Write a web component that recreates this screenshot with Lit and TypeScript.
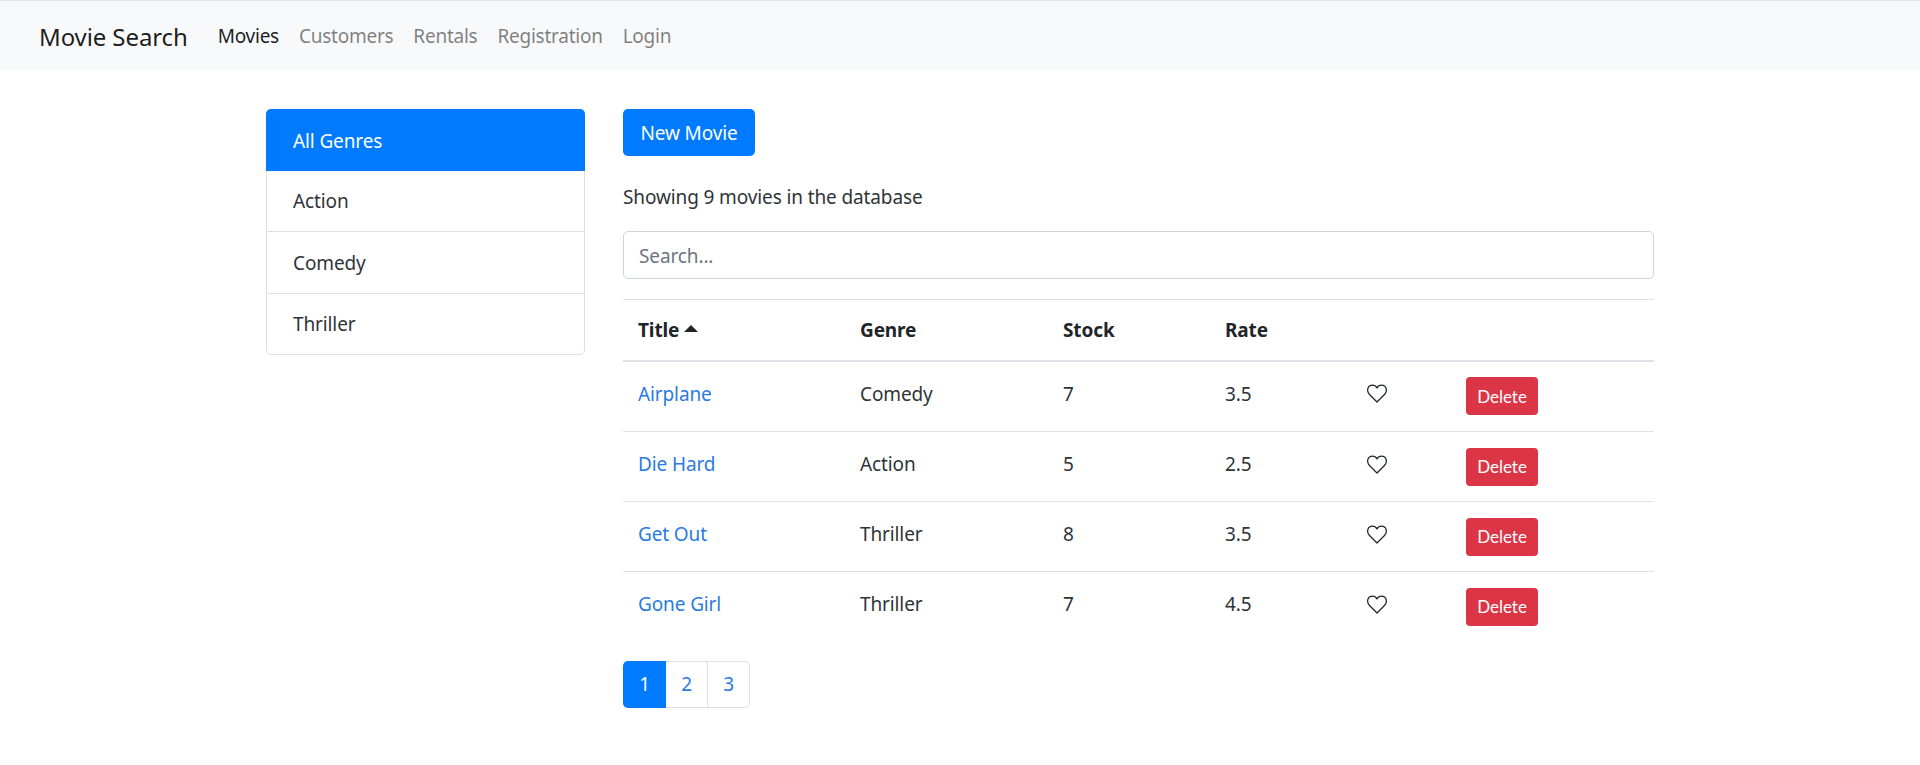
import { LitElement, html, css, svg } from "lit";
import { customElement } from "lit/decorators.js";

const rows = [
  ["Airplane", "Comedy", "7", "3.5"],
  ["Die Hard", "Action", "5", "2.5"],
  ["Get Out", "Thriller", "8", "3.5"],
  ["Gone Girl", "Thriller", "7", "4.5"],
];
const heart = svg`<path d="M8 15.2 1.7 8.8C-1.2 5.8.1 1 4.2 1 6 1 7.3 2 8 3.3 8.7 2 10 1 11.8 1c4.100 0 5.400 4.800 2.500 7.800z" fill="none" stroke="#212529" stroke-width="1.05" stroke-linejoin="round"/>`;

@customElement("app-root")
export class AppRoot extends LitElement {
  static styles = css`
    :host { display: block; height: 765px; background: #fff; color: #2f3438; font-family: "Noto Sans", "Open Sans", sans-serif; font-size: 19px; letter-spacing: -0.12px; overflow: hidden; }
    a { text-decoration: none; color: inherit; }
    .nav { height: 71px; box-sizing: border-box; border-top: 1px solid #dee2e6; background: #f8f9fa; display: flex; align-items: center; padding: 0 39px; }
    .brand { font-size: 24px; letter-spacing: -0.1px; color: rgba(0,0,0,.9); margin-right: 30px; }
    .links { display: flex; gap: 20px; color: rgba(0,0,0,.5); letter-spacing: -0.25px; }
    .links .on { color: rgba(0,0,0,.9); }
    .page { display: flex; gap: 38px; padding: 38px 0 0 266px; width: 1388px; }
    .side { width: 319px; height: 246px; box-sizing: border-box; flex: none; border: 1px solid #dfdfdf; border-radius: 5px; display: flex; flex-direction: column; }
    .side div { flex: none; box-sizing: border-box; height: 62px; display: flex; align-items: center; padding-left: 26px; border-top: 1px solid #dfdfdf; }
    .side div:first-child { border: 0; margin: -1px -1px 0; padding-left: 27px; padding-top: 1px; background: #007bff; color: #fff; border-radius: 5px 5px 0 0; }
    .side div:nth-child(2) { height: 60px; border-top: 0; }
    .side div:last-child { height: 61px; }
    .main { width: 1031px; }
    .new { width: 132px; height: 47px; background: #007bff; color: #fff; border-radius: 5px; display: flex; align-items: center; justify-content: center; }
    .count { margin: 24px 0 0; line-height: 34px; height: 51px; }
    .search { height: 48px; box-sizing: border-box; border: 1px solid #ced4da; border-radius: 5px; display: flex; align-items: center; padding: 1px 15px 0; color: #6c757d; }
    table { border-collapse: collapse; width: 1031px; table-layout: fixed; margin-top: 20px; }
    th { text-align: left; font-weight: 700; color: #212529; height: 61px; padding: 0 15px; border-top: 1px solid #dee2e6; border-bottom: 2px solid #dee2e6; box-sizing: border-box; }
    td { height: 70px; padding: 0 15px 5px; border-top: 1px solid #dee2e6; box-sizing: border-box; }
    td.act { padding-bottom: 0; }
    tr:first-child td { border-top: 0; height: 71px; }
    .caret { display: inline-block; width: 0; height: 0; border: 7px solid transparent; border-top: 0; border-bottom: 7px solid #212529; vertical-align: 5px; margin-left: 5px; }
    .link { color: #2a7ae2; }
    .heart { display: block; width: 20px; height: 19px; }
    .del { width: 72px; height: 38px; background: #dc3545; color: #fff; border-radius: 4px; display: flex; align-items: center; justify-content: center; font-family: Lato, sans-serif; font-size: 17px; letter-spacing: 0; }
    .pages { display: flex; margin-top: 19px; height: 47px; width: 127px; box-sizing: border-box; color: #2a7ae2; }
    .pages span { display: flex; align-items: center; justify-content: center; flex: 1; border: 1px solid #dee2e6; border-left: 0; }
    .pages span:first-child { flex: none; width: 43px; background: #007bff; color: #fff; border: 0; border-radius: 5px 0 0 5px; }
    .pages span:last-child { border-radius: 0 5px 5px 0; }
  `;
  render() {
    return html`
      <nav class="nav">
        <a class="brand">Movie Search</a>
        <div class="links">
          <a class="on">Movies</a><a>Customers</a><a>Rentals</a><a>Registration</a><a>Login</a>
        </div>
      </nav>
      <div class="page">
        <div class="side"><div>All Genres</div><div>Action</div><div>Comedy</div><div>Thriller</div></div>
        <div class="main">
          <a class="new">New Movie</a>
          <p class="count">Showing 9 movies in the database</p>
          <div class="search">Search...</div>
          <table>
            <colgroup><col style="width:222px"><col style="width:203px"><col style="width:162px"><col style="width:142px"><col style="width:99px"><col></colgroup>
            <thead><tr><th>Title<i class="caret"></i></th><th>Genre</th><th>Stock</th><th>Rate</th><th></th><th></th></tr></thead>
            <tbody>
              ${rows.map((r) => html`<tr>
                <td><a class="link">${r[0]}</a></td><td>${r[1]}</td><td>${r[2]}</td><td>${r[3]}</td>
                <td><svg class="heart" viewBox="0 0 16 16">${heart}</svg></td>
                <td class="act"><a class="del">Delete</a></td>
              </tr>`)}
            </tbody>
          </table>
          <div class="pages"><span>1</span><span>2</span><span>3</span></div>
        </div>
      </div>
    `;
  }
}
